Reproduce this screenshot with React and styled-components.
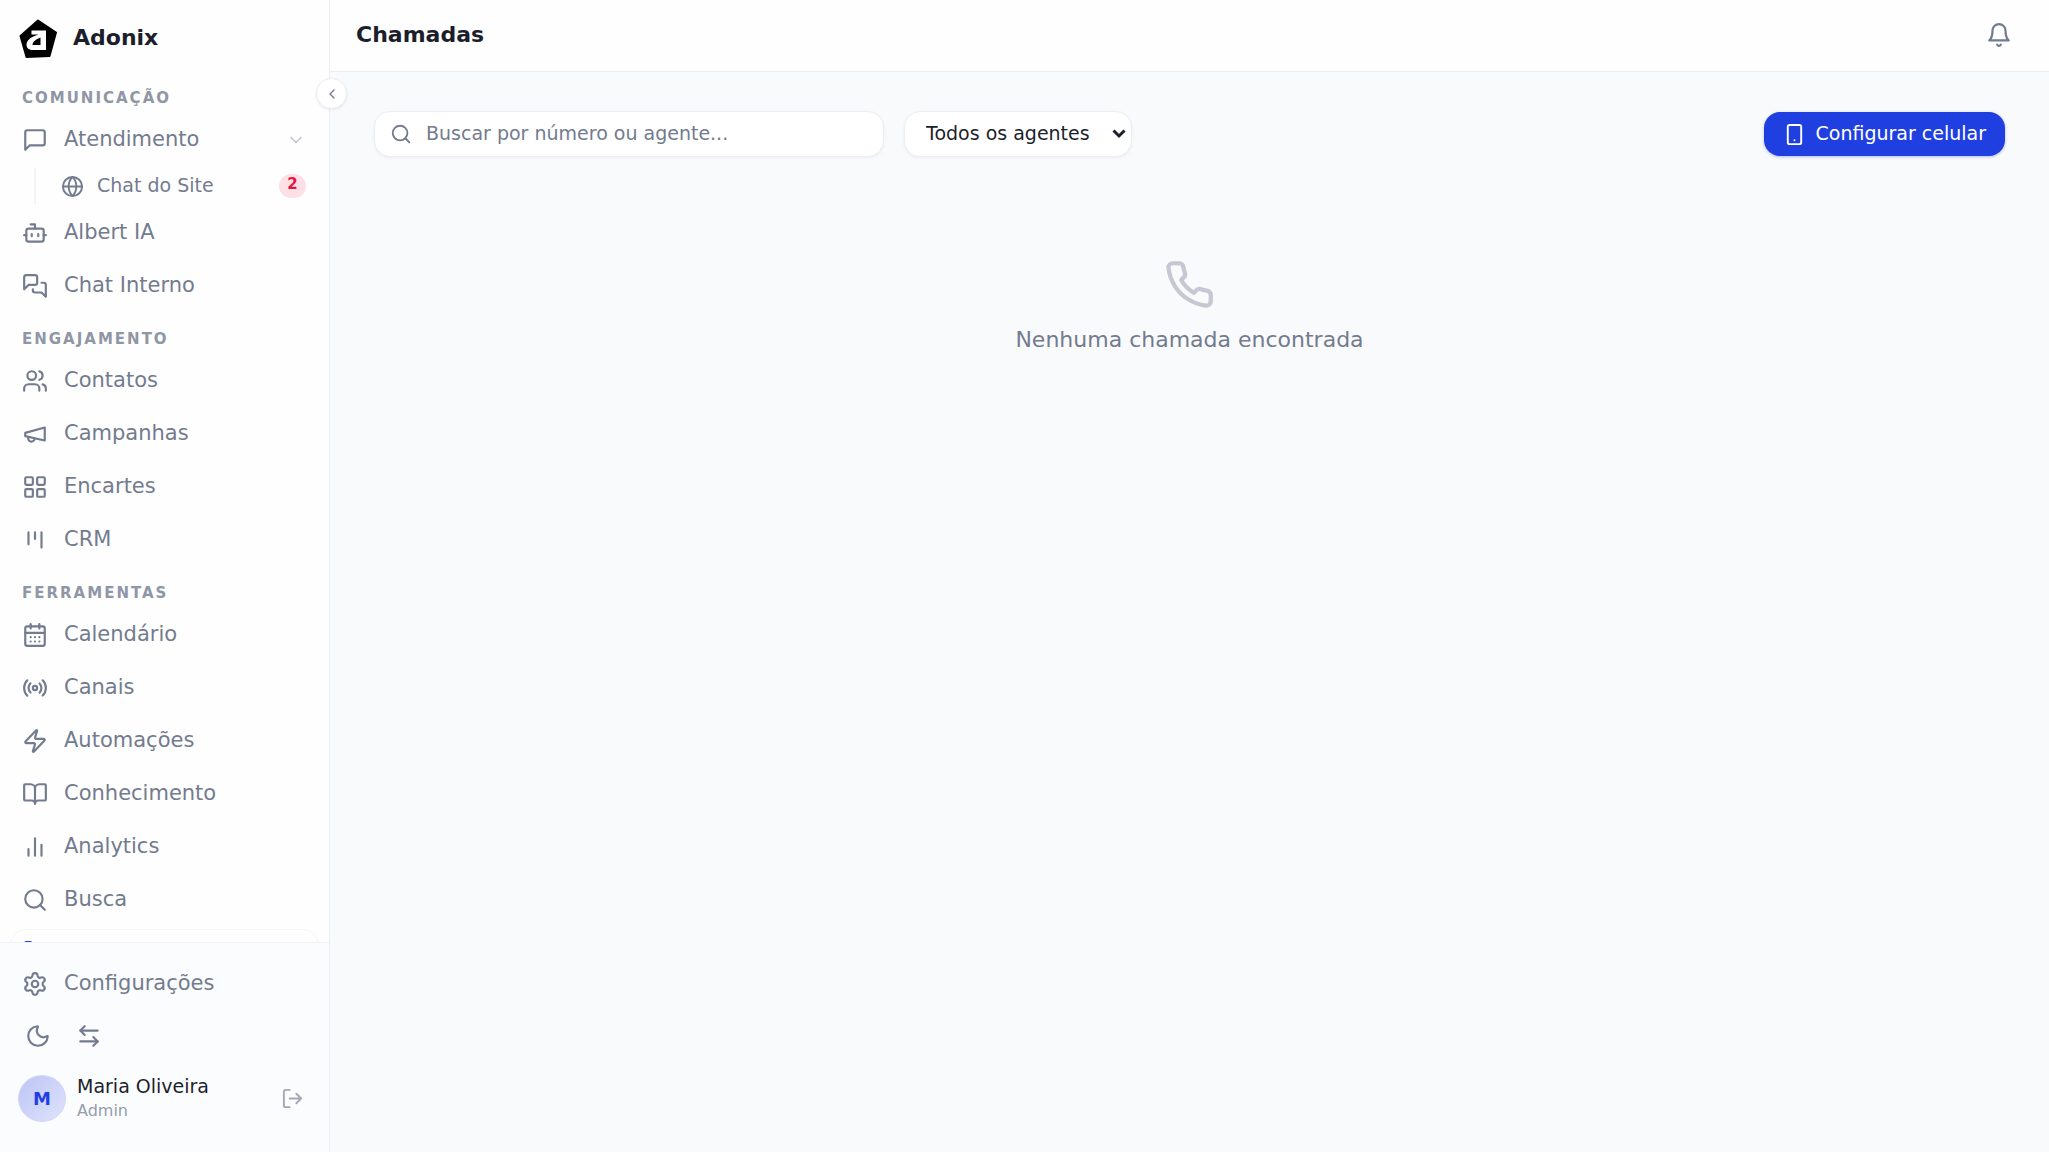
import React from "react";
import styled, { createGlobalStyle } from "styled-components";
import {
  Globe,
  LayoutGrid,
  CalendarDays,
  Zap,
  BookOpen,
  Search,
  Settings,
  Moon,
  ArrowLeftRight,
  ChevronDown,
  ChevronLeft,
} from "lucide-react";

const color = {
  ink: "#1c1f2b",
  muted: "#737b8e",
  label: "#8f96a5",
  faint: "#c2c6d0",
  line: "#eceef3",
  page: "#f9fafc",
  panel: "#fefefe",
  primary: "#1f3fe0",
};

const GlobalStyle = createGlobalStyle`
  *, *::before, *::after { box-sizing: border-box; }
  body {
    margin: 0;
    background: ${color.page};
    color: ${color.ink};
    font-family: "DejaVu Sans", sans-serif;
    font-size: 19px;
  }
  button, input, select { font: inherit; color: inherit; }
  button { border: 0; background: none; padding: 0; cursor: pointer; }
  a { color: inherit; text-decoration: none; }
  ul { list-style: none; margin: 0; padding: 0; }
  svg { display: block; flex: none; }
`;

/* Line icons drawn on a 24-unit grid */
const LineIcon = ({ size = 26, strokeWidth = 2, children }) => (
  <svg
    width={size}
    height={size}
    viewBox="0 0 24 24"
    fill="none"
    stroke="currentColor"
    strokeWidth={strokeWidth}
    strokeLinecap="round"
    strokeLinejoin="round"
    aria-hidden="true"
  >
    {children}
  </svg>
);

const MessageIcon = (p) => (
  <LineIcon {...p}>
    <path d="M21 15a2 2 0 0 1-2 2H7l-4 4V5a2 2 0 0 1 2-2h14a2 2 0 0 1 2 2z" />
  </LineIcon>
);
const BotIcon = (p) => (
  <LineIcon {...p}>
    <path d="M12 8V4H8" />
    <rect width="16" height="12" x="4" y="8" rx="2" />
    <path d="M2 14h2M20 14h2M15 13v2M9 13v2" />
  </LineIcon>
);
const MessagesIcon = (p) => (
  <LineIcon {...p}>
    <path d="M14 9a2 2 0 0 1-2 2H6l-4 4V4a2 2 0 0 1 2-2h8a2 2 0 0 1 2 2z" />
    <path d="M18 9h2a2 2 0 0 1 2 2v11l-4-4h-6a2 2 0 0 1-2-2v-1" />
  </LineIcon>
);
const UsersIcon = (p) => (
  <LineIcon {...p}>
    <path d="M16 21v-2a4 4 0 0 0-4-4H6a4 4 0 0 0-4 4v2" />
    <circle cx="9" cy="7" r="4" />
    <path d="M22 21v-2a4 4 0 0 0-3-3.87M16 3.13a4 4 0 0 1 0 7.75" />
  </LineIcon>
);
const MegaphoneIcon = (p) => (
  <LineIcon {...p}>
    <path d="m3 11 18-5v12L3 14v-3z" />
    <path d="M11.6 16.8a3 3 0 1 1-5.8-1.6" />
  </LineIcon>
);
const KanbanIcon = (p) => (
  <LineIcon {...p}>
    <path d="M6 5v11M12 5v6M18 5v14" />
  </LineIcon>
);
const RadioIcon = (p) => (
  <LineIcon {...p}>
    <path d="M4.9 19.1C1 15.2 1 8.8 4.9 4.9M7.8 16.2c-2.3-2.3-2.3-6.1 0-8.5" />
    <circle cx="12" cy="12" r="2" />
    <path d="M16.2 7.8c2.3 2.3 2.3 6.1 0 8.5M19.1 4.9C23 8.8 23 15.1 19.1 19" />
  </LineIcon>
);
const ChartIcon = (p) => (
  <LineIcon {...p}>
    <path d="M18 20V10M12 20V4M6 20v-6" />
  </LineIcon>
);
const PhoneIcon = (p) => (
  <LineIcon {...p}>
    <path d="M22 16.92v3a2 2 0 0 1-2.18 2 19.79 19.79 0 0 1-8.63-3.07 19.5 19.5 0 0 1-6-6 19.79 19.79 0 0 1-3.07-8.67A2 2 0 0 1 4.11 2h3a2 2 0 0 1 2 1.72 12.84 12.84 0 0 0 .7 2.81 2 2 0 0 1-.45 2.11L8.09 9.91a16 16 0 0 0 6 6l1.27-1.27a2 2 0 0 1 2.11-.45 12.84 12.84 0 0 0 2.81.7A2 2 0 0 1 22 16.92z" />
  </LineIcon>
);
const BellIcon = (p) => (
  <LineIcon {...p}>
    <path d="M6 8a6 6 0 0 1 12 0c0 7 3 9 3 9H3s3-2 3-9" />
    <path d="M10.3 21a1.94 1.94 0 0 0 3.4 0" />
  </LineIcon>
);
const LogoutIcon = (p) => (
  <LineIcon {...p}>
    <path d="M9 21H5a2 2 0 0 1-2-2V5a2 2 0 0 1 2-2h4" />
    <path d="m16 17 5-5-5-5M21 12H9" />
  </LineIcon>
);
const MobileIcon = (p) => (
  <LineIcon {...p}>
    <rect width="14" height="20" x="5" y="2" rx="2" />
    <path d="M12 18h.01" />
  </LineIcon>
);

const Logo = () => (
  <svg width="40" height="40" viewBox="0 0 40 40" aria-hidden="true">
    <path
      d="M20 2.500 38 14.500 31.500 38 8.500 39 2.500 18Z"
      fill="#000"
      stroke="#000"
      strokeWidth="2"
      strokeLinejoin="round"
    />
    <path
      fillRule="evenodd"
      fill="#fff"
      d="M13.500 12.500H28V32H15.500C11 32 8.500 30 8.500 27C8.500 22 13 19 20.500 16.500H13.500ZM22.500 19.500V27H14.500C14.500 23.500 18 21.500 22.500 19.500Z"
    />
  </svg>
);

const Shell = styled.div`
  display: flex;
  height: 100vh;
`;

const Sidebar = styled.aside`
  position: relative;
  display: flex;
  flex-direction: column;
  flex: none;
  width: 330px;
  background: ${color.panel};
  border-right: 1px solid ${color.line};
`;

const CollapseButton = styled.button`
  position: absolute;
  top: 78px;
  right: -18px;
  z-index: 1;
  display: grid;
  place-items: center;
  width: 31px;
  height: 31px;
  border: 1px solid ${color.line};
  border-radius: 50%;
  background: #fff;
  color: ${color.muted};
  box-shadow: 0 1px 3px rgba(20, 30, 60, 0.08);
`;

const Brand = styled.div`
  display: flex;
  align-items: center;
  gap: 15px;
  padding: 18px 18px 11px;
  font-size: 22px;
  font-weight: 700;
`;

const BrandName = styled.span`
  padding-bottom: 2px;
`;

const Nav = styled.nav`
  flex: 1;
  min-height: 0;
  padding: 0 10px;
  overflow-y: auto;
  scrollbar-width: none;
`;

const SectionTitle = styled.h2`
  margin: 0;
  padding: 17px 12px 6px;
  color: ${color.label};
  font-size: 15px;
  font-weight: 700;
  line-height: 24px;
  letter-spacing: 2px;
  text-transform: uppercase;
`;

const NavList = styled.ul`
  display: flex;
  flex-direction: column;
  gap: 5px;
`;

const NavLink = styled.a`
  display: flex;
  align-items: center;
  gap: 16px;
  height: 48px;
  padding: 0 12px 0 11px;
  border: 1px solid ${(p) => (p.$active ? "#f5f6f9" : "transparent")};
  border-radius: 16px;
  color: ${(p) => (p.$active ? color.primary : color.muted)};
  font-size: 21px;
  line-height: 26px;
`;

const NavText = styled.span`
  flex: 1;
  padding-bottom: 3px;
`;

const Caret = styled.span`
  color: ${color.faint};
`;

const SubList = styled.ul`
  margin: 4px 0 0 24px;
  padding-left: 16px;
  border-left: 2px solid #f3f4f7;
`;

const SubLink = styled.a`
  display: flex;
  align-items: center;
  gap: 13px;
  height: 36px;
  padding: 0 13px 0 9px;
  color: ${color.muted};
  font-size: 19px;
`;

const Badge = styled.span`
  min-width: 27px;
  height: 24px;
  border-radius: 12px;
  background: #fde0e6;
  color: #e5173f;
  font-size: 15px;
  font-weight: 700;
  line-height: 21px;
  text-align: center;
`;

const SidebarFooter = styled.div`
  padding: 17px 10px 29px;
  border-top: 1px solid ${color.line};
  background: #fbfcfe;
`;

const QuickActions = styled.div`
  display: flex;
  gap: 5px;
  margin: 5px 0 14px 5px;
`;

const IconButton = styled.button`
  display: grid;
  place-items: center;
  width: 46px;
  height: 46px;
  border-radius: 12px;
  color: ${(p) => (p.$soft ? "#a3a8b5" : color.muted)};
`;

const UserRow = styled.div`
  display: flex;
  align-items: center;
  gap: 11px;
  padding: 0 4px 0 8px;
`;

const Avatar = styled.span`
  display: grid;
  place-items: center;
  width: 48px;
  height: 47px;
  border: 1px solid #cfd6fa;
  border-radius: 50%;
  background: linear-gradient(135deg, #bcc5f4, #dfe3fb);
  color: ${color.primary};
  font-size: 18px;
  font-weight: 700;
`;

const UserInfo = styled.div`
  flex: 1;
`;

const UserName = styled.div`
  font-size: 19px;
  line-height: 26px;
`;

const UserRole = styled.div`
  color: #969cab;
  font-size: 16px;
  line-height: 24px;
`;

const Content = styled.div`
  display: flex;
  flex-direction: column;
  flex: 1;
  min-width: 0;
`;

const TopBar = styled.header`
  display: flex;
  align-items: center;
  justify-content: space-between;
  height: 72px;
  padding: 0 27px 2px 26px;
  border-bottom: 1px solid ${color.line};
  background: ${color.panel};
`;

const PageTitle = styled.h1`
  margin: 0;
  font-size: 22px;
  font-weight: 700;
  line-height: 32px;
`;

const Main = styled.main`
  flex: 1;
  padding: 39px 44px;
`;

const Toolbar = styled.div`
  display: flex;
  align-items: center;
  gap: 20px;
`;

const SearchField = styled.label`
  display: flex;
  align-items: center;
  gap: 14px;
  flex: 0 1 510px;
  height: 46px;
  padding: 0 15px;
  border: 1px solid ${color.line};
  border-radius: 16px;
  background: #fff;
  color: ${color.muted};
  box-shadow: 0 1px 3px rgba(20, 30, 60, 0.06);
`;

const SearchInput = styled.input`
  flex: 1;
  min-width: 0;
  padding: 0 0 2px;
  border: 0;
  outline: 0;
  background: transparent;
  color: ${color.ink};
  &::placeholder { color: ${color.muted}; opacity: 1; }
`;

const SelectWrap = styled.div`
  display: grid;
  align-items: center;
  width: 228px;

  & > * { grid-area: 1 / 1; }
  & > svg {
    justify-self: end;
    margin-right: 6px;
    pointer-events: none;
  }
`;

const AgentSelect = styled.select`
  appearance: none;
  width: 100%;
  height: 46px;
  padding: 0 32px 2px 21px;
  border: 1px solid ${color.line};
  border-radius: 16px;
  background-color: #fff;
  color: ${color.ink};
  box-shadow: 0 1px 3px rgba(20, 30, 60, 0.06);
`;

const PrimaryButton = styled.button`
  display: flex;
  align-items: center;
  gap: 10px;
  height: 44px;
  margin-left: auto;
  padding: 0 19px;
  border-radius: 16px;
  background: ${color.primary};
  color: #fff;
  box-shadow: 0 1px 3px rgba(31, 63, 224, 0.35);
`;

const ButtonText = styled.span`
  padding-bottom: 2px;
`;

const EmptyState = styled.section`
  display: flex;
  flex-direction: column;
  align-items: center;
  gap: 14px;
  padding-top: 102px;
  color: #c5c8d2;
`;

const EmptyText = styled.p`
  margin: 0;
  color: ${color.muted};
  font-size: 22px;
  line-height: 32px;
`;

const sections = [
  {
    title: "Comunicação",
    items: [
      {
        name: "Atendimento",
        icon: MessageIcon,
        children: [{ name: "Chat do Site", icon: Globe, count: 2 }],
      },
      { name: "Albert IA", icon: BotIcon },
      { name: "Chat Interno", icon: MessagesIcon },
    ],
  },
  {
    title: "Engajamento",
    items: [
      { name: "Contatos", icon: UsersIcon },
      { name: "Campanhas", icon: MegaphoneIcon },
      { name: "Encartes", icon: LayoutGrid },
      { name: "CRM", icon: KanbanIcon },
    ],
  },
  {
    title: "Ferramentas",
    items: [
      { name: "Calendário", icon: CalendarDays },
      { name: "Canais", icon: RadioIcon },
      { name: "Automações", icon: Zap },
      { name: "Conhecimento", icon: BookOpen },
      { name: "Analytics", icon: ChartIcon },
      { name: "Busca", icon: Search },
      { name: "Chamadas", icon: PhoneIcon, active: true },
    ],
  },
];

const NavItem = ({ item }) => (
  <li>
    <NavLink
      href="#"
      $active={item.active}
      aria-current={item.active ? "page" : undefined}
    >
      <item.icon size={26} />
      <NavText>{item.name}</NavText>
      {item.children && (
        <Caret>
          <ChevronDown size={20} />
        </Caret>
      )}
    </NavLink>
    {item.children && (
      <SubList>
        {item.children.map((child) => (
          <li key={child.name}>
            <SubLink href="#">
              <child.icon size={23} />
              <NavText>{child.name}</NavText>
              <Badge>{child.count}</Badge>
            </SubLink>
          </li>
        ))}
      </SubList>
    )}
  </li>
);

export default function App() {
  return (
    <>
      <GlobalStyle />
      <Shell>
        <Sidebar>
          <CollapseButton aria-label="Recolher menu">
            <ChevronLeft size={16} />
          </CollapseButton>
          <Brand>
            <Logo />
            <BrandName>Adonix</BrandName>
          </Brand>
          <Nav>
            {sections.map((section) => (
              <section key={section.title}>
                <SectionTitle>{section.title}</SectionTitle>
                <NavList>
                  {section.items.map((item) => (
                    <NavItem key={item.name} item={item} />
                  ))}
                </NavList>
              </section>
            ))}
          </Nav>
          <SidebarFooter>
            <NavLink href="#">
              <Settings size={26} />
              <NavText>Configurações</NavText>
            </NavLink>
            <QuickActions>
              <IconButton aria-label="Modo escuro">
                <Moon size={26} />
              </IconButton>
              <IconButton aria-label="Trocar conta">
                <ArrowLeftRight size={26} />
              </IconButton>
            </QuickActions>
            <UserRow>
              <Avatar>M</Avatar>
              <UserInfo>
                <UserName>Maria Oliveira</UserName>
                <UserRole>Admin</UserRole>
              </UserInfo>
              <IconButton $soft aria-label="Sair">
                <LogoutIcon size={23} />
              </IconButton>
            </UserRow>
          </SidebarFooter>
        </Sidebar>
        <Content>
          <TopBar>
            <PageTitle>Chamadas</PageTitle>
            <IconButton aria-label="Notificações">
              <BellIcon />
            </IconButton>
          </TopBar>
          <Main>
            <Toolbar>
              <SearchField>
                <Search size={22} />
                <SearchInput
                  type="text"
                  aria-label="Buscar chamadas"
                  placeholder="Buscar por número ou agente..."
                />
              </SearchField>
              <SelectWrap>
                <AgentSelect aria-label="Agente">
                  <option>Todos os agentes</option>
                </AgentSelect>
                <svg
                  width="14"
                  height="10"
                  viewBox="0 0 14 10"
                  fill="none"
                  stroke={color.ink}
                  strokeWidth="3"
                  aria-hidden="true"
                >
                  <path d="M1.500 1.500 7 7 12.500 1.500" />
                </svg>
              </SelectWrap>
              <PrimaryButton>
                <MobileIcon size={23} />
                <ButtonText>Configurar celular</ButtonText>
              </PrimaryButton>
            </Toolbar>
            <EmptyState>
              <PhoneIcon size={51} />
              <EmptyText>Nenhuma chamada encontrada</EmptyText>
            </EmptyState>
          </Main>
        </Content>
      </Shell>
    </>
  );
}
